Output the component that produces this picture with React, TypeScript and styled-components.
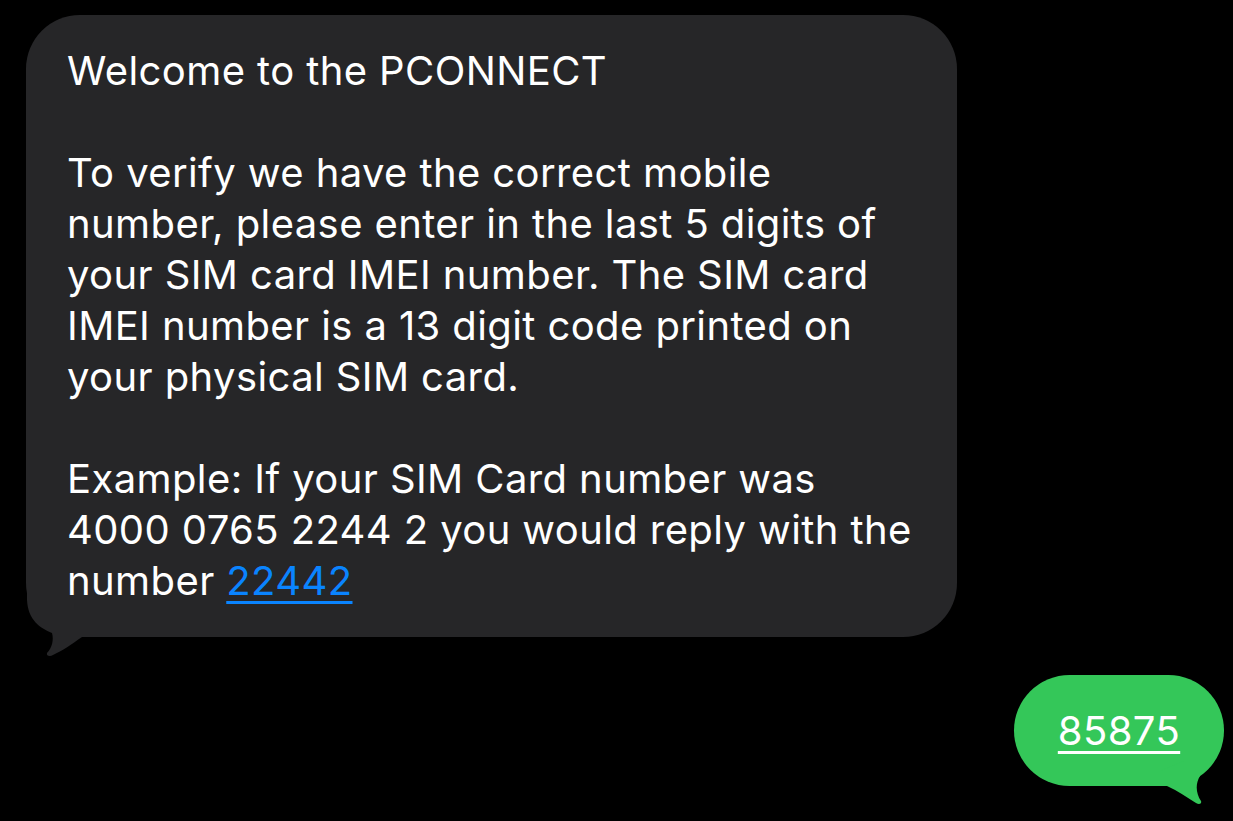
import styled, { createGlobalStyle } from "styled-components";

const Global = createGlobalStyle`
  html, body {
    margin: 0;
    padding: 0;
    background: #000;
  }
  body {
    font-family: Inter, "Noto Sans", "Liberation Sans", sans-serif;
    -webkit-font-smoothing: antialiased;
  }
`;

const Thread = styled.div`
  width: 1233px;
  height: 821px;
  box-sizing: border-box;
  padding: 15px 9px 0 26px;
  display: flex;
  flex-direction: column;
  overflow: hidden;
  background: #000;
`;

const Bubble = styled.div<{ $mine?: boolean }>`
  position: relative;
  box-sizing: border-box;
  color: #fff;
  font-size: 40px;
  line-height: 51px;
  letter-spacing: 0.4px;
  background: ${({ $mine }) => ($mine ? "#34c759" : "#262628")};
  border-radius: ${({ $mine }) => ($mine ? "56px" : "54px")};
  align-self: ${({ $mine }) => ($mine ? "flex-end" : "flex-start")};
`;

const Incoming = styled(Bubble)`
  width: 931px;
  height: 622px;
  padding: 30px 20px 0 41px;
`;

const Outgoing = styled(Bubble)`
  margin-top: 38px;
  width: 210px;
  height: 111px;
  padding: 30px 0 0 0;
  text-align: center;
`;

const Para = styled.p`
  position: relative;
  z-index: 1;
  margin: 0 0 51px;
  &:last-of-type {
    margin-bottom: 0;
  }
`;

const Link = styled.a<{ $mine?: boolean }>`
  position: relative;
  z-index: 1;
  color: ${({ $mine }) => ($mine ? "#fff" : "#0a84ff")};
  text-decoration: underline;
  text-decoration-thickness: 3px;
  text-underline-offset: 6px;
`;

const Tail = styled.svg<{ $mine?: boolean }>`
  position: absolute;
  width: 70px;
  height: 75px;
  top: ${({ $mine }) => ($mine ? "calc(100% - 30px)" : "calc(100% - 50px)")};
  ${({ $mine }) => ($mine ? "right: 0;" : "left: 0;")}
  overflow: visible;
`;

function InTail() {
  return (
    <Tail viewBox="0 0 70 75">
      <path
        d="M1 3 L1 13 C2 33 14 41 26 46 C28 53 26 61 21 66 C20 69 24 70 27 68 C36 64 46 57 56 50 L56 3 Z"
        fill="#262628"
      />
    </Tail>
  );
}

function OutTail() {
  return (
    <Tail $mine viewBox="0 0 70 75">
      <path
        d="M6 15 L6 30 L13 30 C24 35 34 42 42 47 C45 49 48 48 47 45 C42 38 41 28 46 20 L30 5 Z"
        fill="#34c759"
      />
    </Tail>
  );
}

export default function App() {
  return (
    <>
      <Global />
      <Thread>
        <Incoming>
          <InTail />
          <Para>Welcome to the PCONNECT</Para>
          <Para>
            To verify we have the correct mobile
            <br />
            number, please enter in the last 5 digits of
            <br />
            your SIM card IMEI number. The SIM card
            <br />
            IMEI number is a 13 digit code printed on
            <br />
            your physical SIM card.
          </Para>
          <Para>
            Example: If your SIM Card number was
            <br />
            4000 0765 2244 2 you would reply with the
            <br />
            number <Link href="#">22442</Link>
          </Para>
        </Incoming>
        <Outgoing $mine>
          <OutTail />
          <Link $mine href="#">85875</Link>
        </Outgoing>
      </Thread>
    </>
  );
}
